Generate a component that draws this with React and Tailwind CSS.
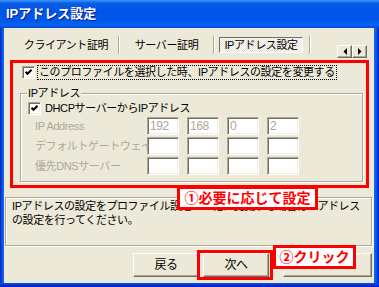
import React from 'react';

function CheckBox() {
  return (
    <span className="flex h-[13px] w-[13px] shrink-0 items-center justify-center border border-t-[#ACA899] border-l-[#ACA899] border-r-white border-b-white bg-white shadow-[inset_1px_1px_0_#716F64,inset_-1px_-1px_0_#F1EFE2]">
      <svg width="7" height="7" viewBox="0 0 7 7">
        <polyline points="0.5,2.8 2.5,4.8 6.5,0.8" fill="none" stroke="#000" strokeWidth="2" />
      </svg>
    </span>
  );
}

function Field({ value }) {
  return (
    <div className="h-[18px] w-[32px] border border-t-[#ACA899] border-l-[#ACA899] border-r-white border-b-white bg-white pl-[2px] pt-[1px] font-['Liberation_Sans',sans-serif] text-[12px] leading-[14px] text-[#ACA899] shadow-[inset_1px_1px_0_#716F64,inset_-1px_-1px_0_#F1EFE2]">
      {value}
    </div>
  );
}

function Row({ label, values }) {
  return (
    <div className="mt-[2px] flex h-[18px] items-center">
      <div className="w-[119px] whitespace-nowrap pl-[7px] text-[#ACA899]">{label}</div>
      <div className="flex gap-[8px]">
        {values.map((v, i) => (
          <Field key={i} value={v} />
        ))}
      </div>
    </div>
  );
}

function Btn({ children, w }) {
  return (
    <div className={`flex h-[24px] ${w} items-center justify-center border border-t-white border-l-white border-r-[#716F64] border-b-[#716F64] bg-[#ECE9D8] text-[12px] shadow-[inset_-1px_-1px_0_#ACA899]`}>
      {children}
    </div>
  );
}

function Sep() {
  return <div className="h-[18px] w-[2px] border-l border-r border-l-[#ACA899] border-r-white" />;
}

function Arrow({ dir }) {
  return (
    <div className="flex h-[13px] w-[15px] items-center justify-center border border-t-white border-l-white border-r-[#716F64] border-b-[#716F64] bg-[#ECE9D8] shadow-[inset_-1px_-1px_0_#ACA899]">
      <svg width="4" height="7" viewBox="0 0 4 7">
        {dir === 'left' ? <path d="M4 0v7L0.5 3.5z" fill="#000" /> : <path d="M0 0v7l3.5-3.5z" fill="#000" />}
      </svg>
    </div>
  );
}

export default function App() {
  return (
    <div className="flex h-[287px] w-[379px] flex-col overflow-hidden font-['Liberation_Sans','Noto_Sans_CJK_JP',sans-serif] text-[11px] tracking-[-0.4px] text-black">
      {/* title bar */}
      <div className="flex h-[28px] shrink-0 items-center bg-[linear-gradient(to_bottom,#3D95FF_0%,#0A5DE6_12%,#0055E5_35%,#0058EE_75%,#0A64F0_90%,#0047D0_100%)] pl-[6px]">
        <span className="text-[13px] font-bold tracking-normal text-white [text-shadow:1px_1px_0_#0A1883]">IPアドレス設定</span>
      </div>

      <div className="flex flex-1">
        <div className="w-[4px] bg-[linear-gradient(to_right,#0019CF,#0855DD,#166AEE)]" />

        {/* client area */}
        <div className="relative flex w-[370px] flex-col bg-[#ECE9D8]">
          {/* tabs */}
          <div className="mt-[8px] flex h-[18px] items-center pl-[14px]">
            <div className="w-[96px] text-center">クライアント証明</div>
            <div className="ml-[4px]"><Sep /></div>
            <div className="w-[93px] text-center">サーバー証明</div>
            <Sep />
            <div className="ml-[4px] flex h-[16px] w-[84px] items-center justify-center border border-t-[#716F64] border-l-[#716F64] border-r-white border-b-white bg-[repeating-conic-gradient(#ffffff_0_25%,#E4E1D2_0_50%)] bg-[length:2px_2px]">
              IPアドレス設定
            </div>
            <div className="ml-[6px]"><Sep /></div>
            <div className="ml-[26px] mt-[12px] flex">
              <Arrow dir="left" />
              <Arrow dir="right" />
            </div>
          </div>

          {/* annotated settings area */}
          <div className="ml-[6px] mt-[6px] flex w-[359px] flex-col border-[3px] border-[#FF0000] pb-[3px] pt-[2px]">
            <div className="flex h-[15px] items-center pl-[9px]">
              <CheckBox />
              <div className="ml-[2px] w-[300px] whitespace-nowrap border border-dotted border-black px-[1px] leading-[13px]">
                このプロファイルを選択した時、IPアドレスの設定を変更する
              </div>
            </div>

            <div className="relative ml-[7px] mt-[13px] h-[89px] w-[343px] border border-[#ACA899] pl-[7px] pt-[8px] shadow-[1px_1px_0_#fff,inset_1px_1px_0_#fff]">
              <div className="absolute -top-[7px] left-[6px] bg-[#ECE9D8] px-[1px] leading-[13px]">IPアドレス</div>
              <div className="flex h-[13px] items-center">
                <CheckBox />
                <span className="ml-[4px] whitespace-nowrap">DHCPサーバーからIPアドレス</span>
              </div>
              <Row label="IP Address" values={['192', '168', '0', '2']} />
              <Row label="デフォルトゲートウェイ" values={['', '', '', '']} />
              <Row label="優先DNSサーバー" values={['', '', '', '']} />
            </div>
          </div>

          {/* description */}
          <div className="ml-[1px] mt-[9px] h-[49px] w-[367px] overflow-hidden whitespace-nowrap border border-[#ACA899] pl-[6px] pt-[1px] leading-[14px] shadow-[1px_1px_0_#fff,inset_1px_1px_0_#fff]">
            IPアドレスの設定をプロファイル設定と一緒に変更する場合はIPアドレス
            <br />
            の設定を行ってください。
          </div>

          {/* buttons */}
          <div className="mt-[7px] flex pl-[129px]">
            <Btn w="w-[66px]">戻る</Btn>
            <div className="ml-[4px]"><Btn w="w-[66px]">次へ</Btn></div>
            <div className="ml-[14px]"><Btn w="w-[89px]"></Btn></div>
          </div>

          {/* annotations */}
          <div className="absolute left-[173px] top-[158px] flex h-[24px] w-[141px] items-center justify-center border-[3px] border-[#FF0000] bg-white text-[14px] font-bold tracking-normal text-[#FF0000]">
            ①必要に応じて設定
          </div>
          <div className="absolute left-[193px] top-[222px] h-[30px] w-[76px] border-[3px] border-[#FF0000]" />
          <div className="absolute left-[269px] top-[217px] flex h-[24px] w-[83px] items-center justify-center border-[3px] border-[#FF0000] bg-white text-[14px] font-bold tracking-normal text-[#FF0000]">
            ②クリック
          </div>
        </div>

        <div className="w-[5px] bg-[linear-gradient(to_left,#0019CF,#0855DD,#166AEE)]" />
      </div>
      <div className="h-[4px] shrink-0 bg-[linear-gradient(to_top,#0019CF,#0855DD)]" />
    </div>
  );
}
